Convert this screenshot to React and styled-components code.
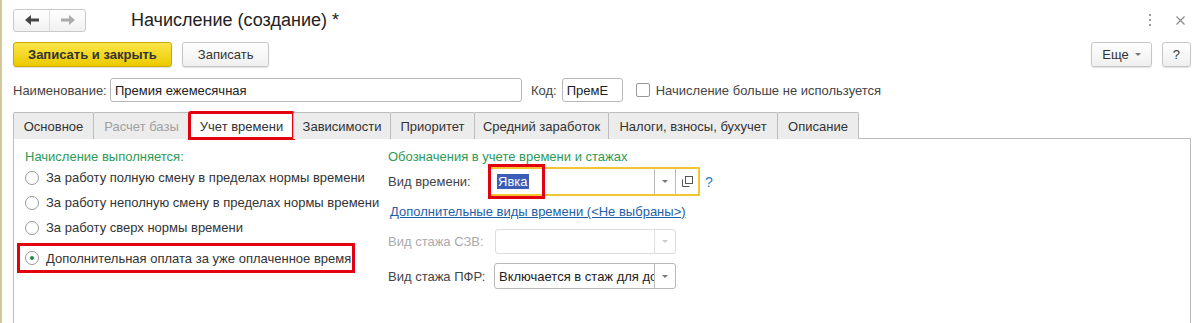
import React from 'react'
import styled, { createGlobalStyle } from 'styled-components'

const Global = createGlobalStyle`
  html, body { margin: 0; padding: 0; background: #fff; }
  body { font-family: "Liberation Sans", Arial, sans-serif; font-size: 13px; color: #333; }
`

const Page = styled.div`
  width: 1200px;
  height: 323px;
  box-sizing: border-box;
  border-left: 2px solid #d3c79c;
  padding: 0 9px 0 11px;
  overflow: hidden;
`

const Header = styled.div`
  display: flex;
  align-items: center;
  padding-top: 8px;
  height: 24px;
`

const NavGroup = styled.div`
  display: flex;
  width: 73px;
  height: 23px;
  box-sizing: border-box;
  border: 1px solid #c9c9c9;
  border-radius: 3px;
  background: linear-gradient(#fff, #f1f1f1);
`

const NavBtn = styled.div`
  flex: 1;
  display: flex;
  align-items: center;
  justify-content: center;
  & + & { border-left: 1px solid #dcdcdc; }
`

const Title = styled.div`
  margin-left: 45px;
  font-size: 18px;
  color: #222;
  padding-top: 1px;
`

const WinIcons = styled.div`
  margin-left: auto;
  display: flex;
  align-items: center;
  gap: 24px;
  padding-right: 6px;
  color: #888;
`

const Toolbar = styled.div`
  display: flex;
  align-items: center;
  margin-top: 10px;
  height: 25px;
  gap: 10px;
`

const Button = styled.div`
  height: 25px;
  box-sizing: border-box;
  padding: 0 ${p => p.$pad || 14}px;
  display: flex;
  align-items: center;
  gap: 6px;
  border-radius: 3px;
  border: 1px solid ${p => (p.$primary ? '#c7a900' : '#c6c6c6')};
  background: ${p => (p.$primary ? 'linear-gradient(#fbe64a, #ecca00)' : 'linear-gradient(#fff, #efefef)')};
  font-weight: ${p => (p.$primary ? 'bold' : 'normal')};
  color: #333;
  box-shadow: 0 1px 1px rgba(0, 0, 0, 0.12);
`

const Spacer = styled.div`
  flex: 1;
`

const FieldRow = styled.div`
  display: flex;
  align-items: center;
  margin-top: 11px;
  height: 24px;
`

const Label = styled.span`
  color: ${p => (p.$disabled ? '#aaa' : '#444')};
  width: ${p => (p.$w ? `${p.$w}px` : 'auto')};
  flex-shrink: 0;
  white-space: nowrap;
`

const Input = styled.div`
  width: ${p => p.$w}px;
  height: ${p => p.$h || 24}px;
  box-sizing: border-box;
  border: 1px solid ${p => (p.$disabled ? '#dcdcdc' : '#b8b8b8')};
  border-radius: 3px;
  background: #fff;
  display: flex;
  align-items: center;
  padding-left: 4px;
  color: #222;
  white-space: nowrap;
  overflow: hidden;
  margin-left: ${p => p.$ml || 0}px;
  flex-shrink: 0;
`

const InputText = styled.span`
  flex: 1;
  overflow: hidden;
`

const DropBtn = styled.div`
  width: 20px;
  align-self: stretch;
  border-left: 1px solid ${p => (p.$disabled ? '#e0e0e0' : '#bcbcbc')};
  display: flex;
  align-items: center;
  justify-content: center;
  flex-shrink: 0;
  &::after {
    content: '';
    border-left: 3px solid transparent;
    border-right: 3px solid transparent;
    border-top: 3px solid ${p => (p.$disabled ? '#ccc' : '#777')};
  }
`

const OpenBtn = styled.div`
  width: 22px;
  align-self: stretch;
  border-left: 1px solid #bcbcbc;
  display: flex;
  align-items: center;
  justify-content: center;
`

const Checkbox = styled.span`
  width: 14px;
  height: 14px;
  box-sizing: border-box;
  border: 1px solid #999;
  border-radius: 2px;
  margin: 0 6px 0 13px;
  background: #fff;
`

const Tabs = styled.div`
  display: flex;
  margin-top: 10px;
  height: 26px;
  position: relative;
  z-index: 1;
`

const Tab = styled.div`
  box-sizing: border-box;
  width: ${p => p.$w}px;
  height: 27px;
  display: flex;
  align-items: center;
  justify-content: center;
  white-space: nowrap;
  border: 1px solid #bcbcbc;
  border-bottom: none;
  margin-left: -1px;
  &:first-child { margin-left: 0; }
  background: ${p => (p.$active ? '#fff' : '#ececec')};
  color: ${p => (p.$disabled ? '#a0a0a0' : '#333')};
  border-radius: 2px 2px 0 0;
  ${p => p.$active && `
    outline: 3px solid #e3000f;
    outline-offset: -2px;
  `}
`

const Panel = styled.div`
  border: 1px solid #bcbcbc;
  height: 200px;
  display: flex;
  padding: 10px 0 0 11px;
  box-sizing: border-box;
`

const LeftCol = styled.div`
  width: 363px;
  flex-shrink: 0;
`

const RightCol = styled.div`
  display: flex;
  flex-direction: column;
`

const GroupTitle = styled.div`
  color: #2e9a55;
  height: 16px;
  line-height: 16px;
`

const RadioRow = styled.div`
  display: flex;
  align-items: center;
  height: 25px;
  white-space: nowrap;
  color: #333;
`

const Radio = styled.span`
  width: 14px;
  height: 14px;
  box-sizing: border-box;
  border: 1px solid #999;
  border-radius: 50%;
  margin-right: 7px;
  display: flex;
  align-items: center;
  justify-content: center;
  background: #fff;
  &::after {
    content: '';
    width: 4px;
    height: 4px;
    border-radius: 50%;
    background: ${p => (p.$checked ? '#1e8a4a' : 'transparent')};
  }
`

const Highlight = styled.div`
  margin: 3px 0 0 -8px;
  width: 338px;
  height: 30px;
  box-sizing: border-box;
  border: 3px solid #e3000f;
  padding-left: 5px;
  display: flex;
  align-items: center;
`

const FormRow = styled.div`
  display: flex;
  align-items: center;
  margin-top: ${p => p.$mt || 0}px;
`

const FocusWrap = styled.div`
  position: relative;
  border: 2px solid #f2c531;
  width: 212px;
  height: 29px;
  box-sizing: border-box;
  display: flex;
  align-items: center;
`

const Selected = styled.span`
  background: #3b5db5;
  color: #fff;
  padding: 1px 1px;
  margin-left: 7px;
`

const RedMark = styled.div`
  position: absolute;
  left: -2px;
  top: -5px;
  width: 57px;
  height: 35px;
  box-sizing: border-box;
  border: 3px solid #e3000f;
`

const HelpMark = styled.span`
  color: #2a7fc2;
  margin-left: 5px;
  font-size: 14px;
`

const Link = styled.span`
  color: #1e5fa8;
  text-decoration: underline;
  margin-left: 2px;
`

const ArrowIcon = ({ dir, color }) => (
  <svg width="14" height="10" viewBox="0 0 14 10">
    <g transform={dir === 'right' ? 'translate(14 0) scale(-1 1)' : undefined} fill={color}>
      <polygon points="0,5 6,0 6,3.5 14,3.5 14,6.5 6,6.5 6,10" />
    </g>
  </svg>
)

const OpenIcon = () => (
  <svg width="11" height="11" viewBox="0 0 11 11" fill="none" stroke="#555" strokeWidth="1">
    <rect x="3.5" y="0.5" width="7" height="7" />
    <path d="M0.5 3.5 V10.5 H7.5" />
  </svg>
)

const MoreIcon = () => (
  <svg width="4" height="12" viewBox="0 0 4 12" fill="#999">
    <rect x="1" y="0" width="2" height="2" />
    <rect x="1" y="5" width="2" height="2" />
    <rect x="1" y="10" width="2" height="2" />
  </svg>
)

const CloseIcon = () => (
  <svg width="9" height="9" viewBox="0 0 9 9" stroke="#888" strokeWidth="1.1">
    <path d="M0.5 0.5 L8.5 8.5 M8.5 0.5 L0.5 8.5" />
  </svg>
)

const Caret = styled.span`
  border-left: 3px solid transparent;
  border-right: 3px solid transparent;
  border-top: 3px solid #777;
`

const tabs = [
  { t: 'Основное', w: 81 },
  { t: 'Расчет базы', w: 97, disabled: true },
  { t: 'Учет времени', w: 105, active: true },
  { t: 'Зависимости', w: 98 },
  { t: 'Приоритет', w: 85 },
  { t: 'Средний заработок', w: 135 },
  { t: 'Налоги, взносы, бухучет', w: 170 },
  { t: 'Описание', w: 82 },
]

const radios = [
  'За работу полную смену в пределах нормы времени',
  'За работу неполную смену в пределах нормы времени',
  'За работу сверх нормы времени',
]

export default function App() {
  return (
    <Page>
      <Global />
      <Header>
        <NavGroup>
          <NavBtn><ArrowIcon dir="left" color="#444" /></NavBtn>
          <NavBtn><ArrowIcon dir="right" color="#aaa" /></NavBtn>
        </NavGroup>
        <Title>Начисление (создание) *</Title>
        <WinIcons>
          <MoreIcon />
          <CloseIcon />
        </WinIcons>
      </Header>

      <Toolbar>
        <Button $primary $pad={14}>Записать и закрыть</Button>
        <Button $pad={15}>Записать</Button>
        <Spacer />
        <Button $pad={10}>Еще <Caret /></Button>
        <Button $pad={10}>?</Button>
      </Toolbar>

      <FieldRow>
        <Label $w={97}>Наименование:</Label>
        <Input $w={412}>Премия ежемесячная</Input>
        <Label style={{ marginLeft: 9 }}>Код:</Label>
        <Input $w={61} $ml={5}>ПремЕ</Input>
        <Checkbox />
        <Label>Начисление больше не используется</Label>
      </FieldRow>

      <Tabs>
        {tabs.map(tab => (
          <Tab key={tab.t} $w={tab.w} $active={tab.active} $disabled={tab.disabled}>
            {tab.t}
          </Tab>
        ))}
      </Tabs>

      <Panel>
        <LeftCol>
          <GroupTitle>Начисление выполняется:</GroupTitle>
          {radios.map(r => (
            <RadioRow key={r}><Radio />{r}</RadioRow>
          ))}
          <Highlight>
            <RadioRow>
              <Radio $checked />Дополнительная оплата за уже оплаченное время
            </RadioRow>
          </Highlight>
        </LeftCol>

        <RightCol>
          <GroupTitle>Обозначения в учете времени и стажах</GroupTitle>
          <FormRow $mt={2}>
            <Label $w={100}>Вид времени:</Label>
            <FocusWrap>
              <RedMark />
              <InputText><Selected>Явка</Selected></InputText>
              <DropBtn />
              <OpenBtn><OpenIcon /></OpenBtn>
            </FocusWrap>
            <HelpMark>?</HelpMark>
          </FormRow>
          <FormRow $mt={8}>
            <Link>Дополнительные виды времени (&lt;Не выбраны&gt;)</Link>
          </FormRow>
          <FormRow $mt={10}>
            <Label $w={107} $disabled>Вид стажа СЗВ:</Label>
            <Input $w={181} $h={25} $disabled>
              <InputText />
              <DropBtn $disabled />
            </Input>
          </FormRow>
          <FormRow $mt={9}>
            <Label $w={106}>Вид стажа ПФР:</Label>
            <Input $w={182} $h={26}>
              <InputText>Включается в стаж для досрочного назначения пенсии</InputText>
              <DropBtn />
            </Input>
          </FormRow>
        </RightCol>
      </Panel>
    </Page>
  )
}
